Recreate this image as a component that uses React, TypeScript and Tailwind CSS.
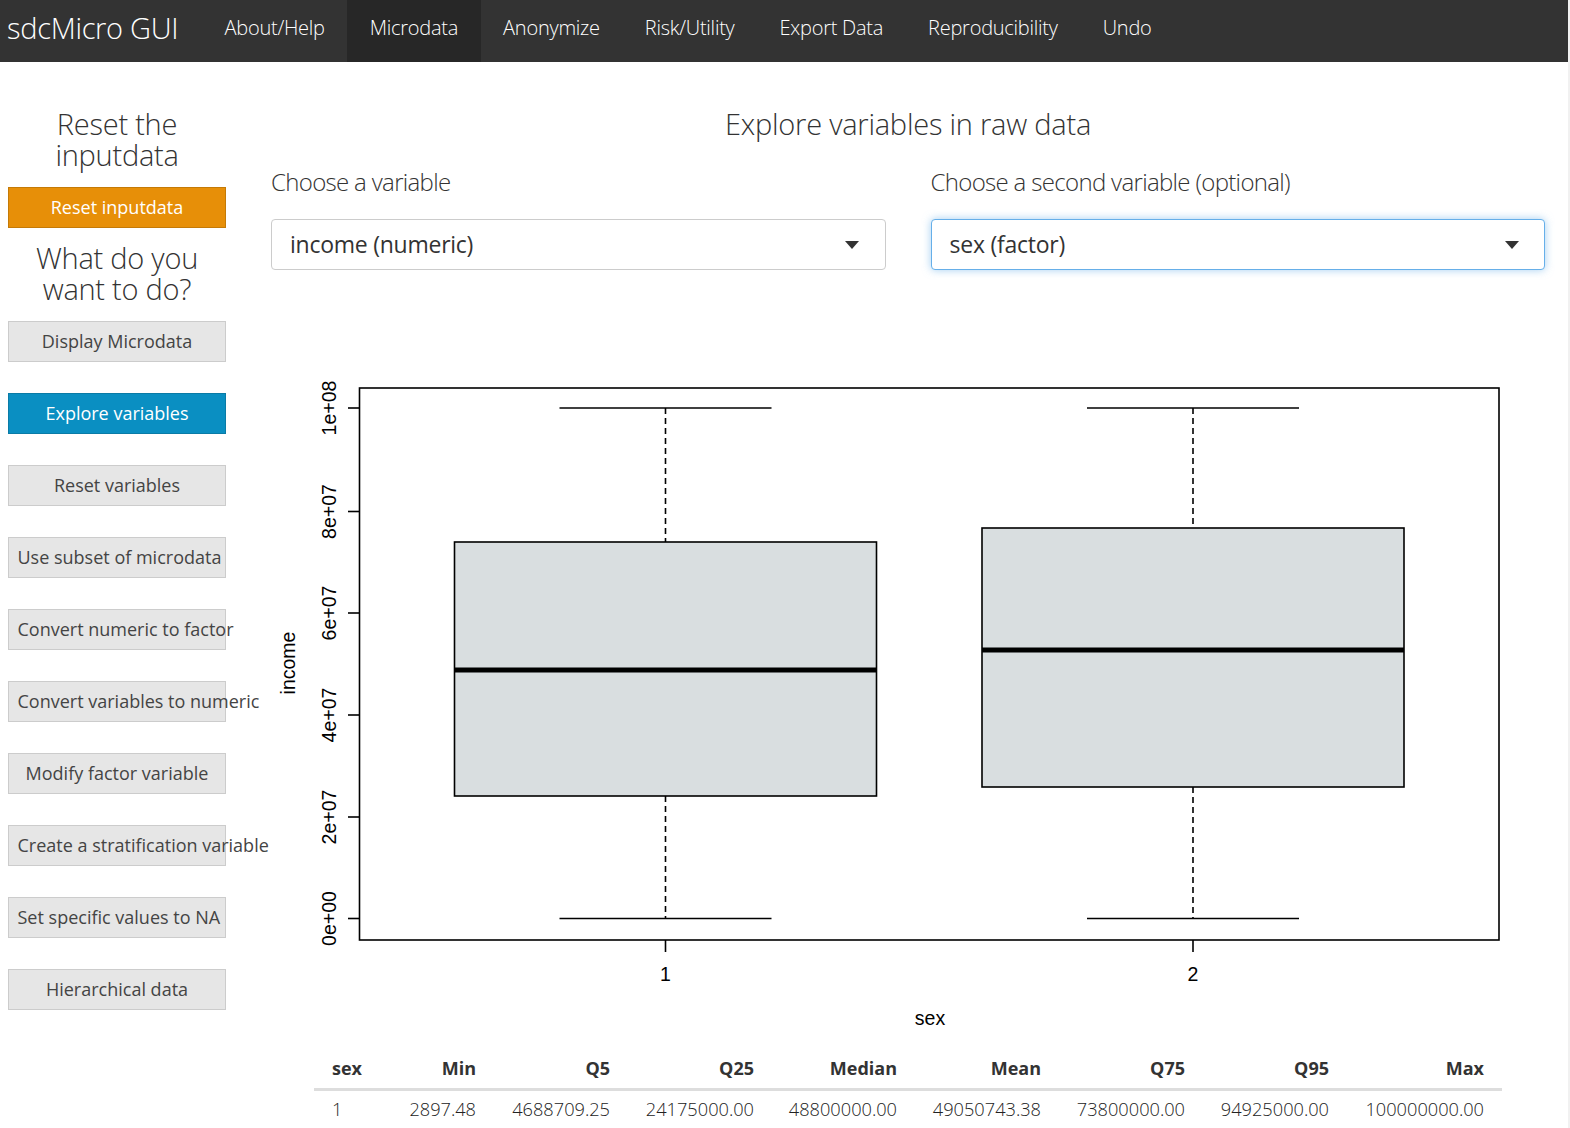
const font = "font-['Open_Sans',sans-serif]";

const navItems = ["About/Help", "Microdata", "Anonymize", "Risk/Utility", "Export Data", "Reproducibility", "Undo"];

const sideButtons = [
  "Display Microdata",
  "Explore variables",
  "Reset variables",
  "Use subset of microdata",
  "Convert numeric to factor",
  "Convert variables to numeric",
  "Modify factor variable",
  "Create a stratification variable",
  "Set specific values to NA",
  "Hierarchical data",
];

const tableHead = ["sex", "Min", "Q5", "Q25", "Median", "Mean", "Q75", "Q95", "Max"];
const tableRow = ["1", "2897.48", "4688709.25", "24175000.00", "48800000.00", "49050743.38", "73800000.00", "94925000.00", "100000000.00"];
const colWidths = ["w-[68px]", "w-[112px]", "w-[134px]", "w-[144px]", "w-[143px]", "w-[144px]", "w-[144px]", "w-[144px]", "w-[155px]"];

function Select({ label, value, focused }: { label: string; value: string; focused?: boolean }) {
  return (
    <div className="flex-1">
      <div className="h-[37px] text-[24px] leading-[37px] font-light text-[#333] tracking-[-0.67px]">{label}</div>
      <div
        className={
          focused
            ? "mt-[19px] h-[51px] flex items-center justify-between pl-[18px] pr-[25px] bg-white rounded-[4px] border border-[#66afe9] shadow-[0_0_8px_rgba(102,175,233,0.6)]"
            : "mt-[19px] h-[51px] flex items-center justify-between pl-[18px] pr-[26px] bg-white rounded-[4px] border border-[#ccc]"
        }
      >
        <span className="text-[23px] text-[#333] tracking-[-0.25px]">{value}</span>
        <span className="w-0 h-0 border-x-[7.5px] border-x-transparent border-t-[8px] border-t-[#333]" />
      </div>
    </div>
  );
}

function Box({ x, top, bottom, median }: { x: number; top: number; bottom: number; median: number }) {
  return (
    <g stroke="#000" fill="none">
      <line x1={x - 106} x2={x + 106} y1={56} y2={56} strokeWidth="1.6" />
      <line x1={x - 106} x2={x + 106} y1={566.5} y2={566.5} strokeWidth="1.6" />
      <line x1={x} x2={x} y1={56} y2={top} strokeWidth="1.6" strokeDasharray="6 4" />
      <line x1={x} x2={x} y1={bottom} y2={566.5} strokeWidth="1.6" strokeDasharray="6 4" />
      <rect x={x - 211} y={top} width={422} height={bottom - top} fill="#d9dee0" strokeWidth="1.6" />
      <line x1={x - 211} x2={x + 211} y1={median} y2={median} strokeWidth="5" />
    </g>
  );
}

function Chart() {
  const ticks = [
    { y: 566.5, label: "0e+00" },
    { y: 465, label: "2e+07" },
    { y: 363, label: "4e+07" },
    { y: 261, label: "6e+07" },
    { y: 159.5, label: "8e+07" },
    { y: 56, label: "1e+08" },
  ];
  return (
    <svg width="1250" height="690" viewBox="0 0 1250 690" className="block">
      <rect x="88.5" y="36" width="1139.5" height="552" fill="none" stroke="#000" strokeWidth="1.6" />
      <Box x={394.5} top={190} bottom={444} median={318} />
      <Box x={922} top={176} bottom={435} median={298} />
      {ticks.map((t) => (
        <g key={t.label}>
          <line x1="77" x2="88.5" y1={t.y} y2={t.y} stroke="#000" strokeWidth="1.6" />
          <text
            transform={`translate(65 ${t.y}) rotate(-90)`}
            textAnchor="middle"
            fontFamily="'Liberation Sans', sans-serif"
            fontSize="19.5"
            fill="#000"
          >
            {t.label}
          </text>
        </g>
      ))}
      <line x1="394.5" x2="394.5" y1="588" y2="600" stroke="#000" strokeWidth="1.6" />
      <line x1="922" x2="922" y1="588" y2="600" stroke="#000" strokeWidth="1.6" />
      <g fontFamily="'Liberation Sans', sans-serif" fontSize="19.5" fill="#000" textAnchor="middle">
        <text x="394.5" y="629">1</text>
        <text x="922" y="629">2</text>
        <text x="659" y="672.5">sex</text>
        <text transform="translate(23.5 311) rotate(-90)">income</text>
      </g>
    </svg>
  );
}

export default function App() {
  return (
    <div className={`${font} w-full h-[1128px] overflow-hidden bg-white flex`}>
      <div className="flex-1 min-w-0">
        <nav className="h-[62px] bg-[#333] flex items-stretch text-white">
          <div className="pl-[7px] pb-[6px] flex items-center text-[29px] font-light tracking-[-0.3px] w-[202px] whitespace-nowrap">sdcMicro GUI</div>
          {navItems.map((item) => (
            <div
              key={item}
              className={
                item === "Microdata"
                  ? "px-[22.5px] pb-[6px] flex items-center text-[20px] tracking-[-0.25px] font-light bg-[#272727]"
                  : "px-[22.5px] pb-[6px] flex items-center text-[20px] tracking-[-0.25px] font-light"
              }
            >
              {item}
            </div>
          ))}
        </nav>

        <div className="flex pt-[46px] pl-2 pr-[23px] gap-[45px]">
          <aside className="w-[218px] shrink-0">
            <h3 className="text-[29px] leading-[31px] font-light text-[#333] text-center tracking-[-0.25px]">Reset the inputdata</h3>
            <div className="mt-[17px] h-[41px] flex items-center justify-center bg-[#e78f08] border border-[#c47a07] text-white text-[18px]">Reset inputdata</div>
            <h3 className="mt-[14px] text-[29px] leading-[31px] font-light text-[#333] text-center tracking-[-0.25px]">What do you want to do?</h3>
            <div className="mt-[17px] flex flex-col gap-[31px]">
              {sideButtons.map((b) => (
                <div
                  key={b}
                  className={
                    b === "Explore variables"
                      ? "h-[41px] leading-[39px] px-[8.5px] text-center whitespace-nowrap text-[18px] bg-[#0a8fc2] border border-[#0a7ba6] text-white"
                      : "h-[41px] leading-[39px] px-[8.5px] text-center whitespace-nowrap text-[18px] bg-[#e6e6e6] border border-[#ccc] text-[#444]"
                  }
                >
                  {b}
                </div>
              ))}
            </div>
          </aside>

          <main className="flex-1 min-w-0">
            <h3 className="h-[31px] text-[29px] leading-[31px] font-light text-[#333] text-center tracking-[-0.23px]">Explore variables in raw data</h3>
            <div className="mt-[24px] flex gap-[45px]">
              <Select label="Choose a variable" value="income (numeric)" />
              <Select label="Choose a second variable (optional)" value="sex (factor)" focused />
            </div>
            <div className="mt-[81.5px]">
              <Chart />
            </div>
            <div className="ml-[43px] w-[1188px] mt-[7px] text-[18px] text-[#333]">
              <div className="flex h-[42px] items-center font-bold border-b-[3px] border-[#ddd]">
                {tableHead.map((h, i) => (
                  <div key={h} className={i === 0 ? `${colWidths[i]} pl-[18px] text-left` : `${colWidths[i]} pr-[18px] text-right`}>{h}</div>
                ))}
              </div>
              <div className="flex h-[39px] items-center font-light text-[18.2px] text-[#222]">
                {tableRow.map((c, i) => (
                  <div key={i} className={i === 0 ? `${colWidths[i]} pl-[18px] text-left` : `${colWidths[i]} pr-[18px] text-right`}>{c}</div>
                ))}
              </div>
            </div>
          </main>
        </div>
      </div>
      <div className="w-[2px] shrink-0 bg-[#f1f1f1]" />
    </div>
  );
}
